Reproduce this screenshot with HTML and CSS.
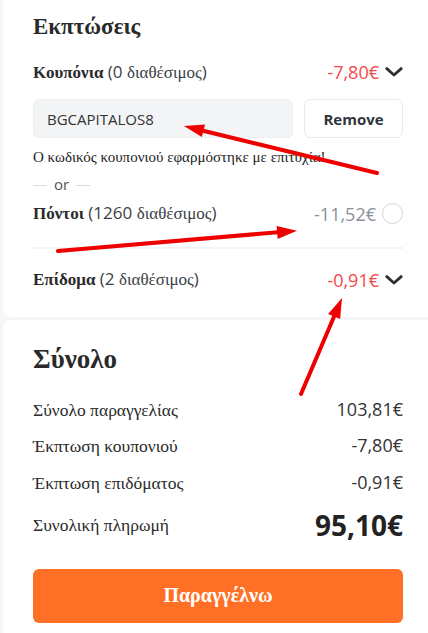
FILE: index.html
```html
<!DOCTYPE html>
<html lang="el">
<head>
<meta charset="utf-8">
<title>Εκπτώσεις</title>
<link rel="stylesheet" href="styles.css">
</head>
<body>
<div class="page">
  <section class="card discounts">
    <h2 class="card-title gr">Εκπτώσεις</h2>

    <div class="row line-row">
      <div class="label"><b class="gr">Κουπόνια</b> <span class="count">(0 <span class="gr">διαθέσιμος</span>)</span></div>
      <div class="value red">-7,80€
        <svg class="chevron" viewBox="0 0 18 10" width="18" height="10"><path d="M1.8 1.6 L9 8 L16.2 1.6" fill="none" stroke="#2b2f36" stroke-width="2.8" stroke-linecap="round" stroke-linejoin="round"/></svg>
      </div>
    </div>

    <div class="coupon-form">
      <div class="code-input">BGCAPITALOS8</div>
      <button class="remove-btn">Remove</button>
    </div>
    <p class="success gr">Ο κωδικός κουπονιού εφαρμόστηκε με επιτυχία!</p>

    <div class="or"><span class="or-line"></span><span>or</span><span class="or-line"></span></div>

    <div class="row line-row points">
      <div class="label"><b class="gr">Πόντοι</b> <span class="count">(1260 <span class="gr">διαθέσιμος</span>)</span></div>
      <div class="value grey">-11,52€ <span class="radio"></span></div>
    </div>

    <div class="divider"></div>

    <div class="row line-row bonus">
      <div class="label"><b class="gr">Επίδομα</b> <span class="count">(2 <span class="gr">διαθέσιμος</span>)</span></div>
      <div class="value red">-0,91€
        <svg class="chevron" viewBox="0 0 18 10" width="18" height="10"><path d="M1.8 1.6 L9 8 L16.2 1.6" fill="none" stroke="#2b2f36" stroke-width="2.8" stroke-linecap="round" stroke-linejoin="round"/></svg>
      </div>
    </div>
  </section>

  <section class="card summary">
    <h2 class="card-title big gr">Σύνολο</h2>
    <div class="sum-row first"><span class="gr">Σύνολο παραγγελίας</span><span class="amount">103,81€</span></div>
    <div class="sum-row"><span class="gr">Έκπτωση κουπονιού</span><span class="amount">-7,80€</span></div>
    <div class="sum-row"><span class="gr">Έκπτωση επιδόματος</span><span class="amount">-0,91€</span></div>
    <div class="sum-row total"><span class="gr">Συνολική πληρωμή</span><span class="amount grand">95,10€</span></div>
    <button class="order-btn gr">Παραγγέλνω</button>
  </section>
</div>

<svg class="annotations" viewBox="0 0 428 633" width="428" height="633">
  <g stroke="#ee0000" stroke-width="4" stroke-linecap="round" fill="#ee0000">
    <line x1="377" y1="173" x2="200" y2="130"/>
    <polygon stroke="none" points="184,126 205,124.4 201.9,137"/>
    <line x1="58" y1="251" x2="281" y2="232"/>
    <polygon stroke="none" points="297,230.7 277.7,238.9 276.6,225.9"/>
    <line x1="301" y1="394" x2="336" y2="312"/>
    <polygon stroke="none" points="342,298 340.1,319 328.1,313.9"/>
  </g>
</svg>
</body>
</html>
```
FILE: styles.css
```css
* { box-sizing: border-box; }

html, body {
  margin: 0;
  padding: 0;
  background: #f5f6f8;
  color: #333;
  font-family: "Open Sans", "Liberation Sans", sans-serif;
}

body { overflow: hidden; }

.gr { font-family: "Liberation Serif", "Times New Roman", serif; }

.page {
  padding-left: 3px;
  display: flex;
  flex-direction: column;
  gap: 3px;
}

.card {
  background: #fff;
  padding: 0 25px 0 30px;
}

.discounts {
  padding-top: 14px;
  padding-bottom: 23px;
  border-radius: 0 0 0 8px;
}

.summary {
  padding-top: 23px;
  padding-bottom: 40px;
  border-radius: 8px 0 0 0;
}

.card-title {
  margin: 0;
  font-size: 23px;
  line-height: 26px;
  font-weight: 700;
  color: #2a2a2a;
}

.card-title.big {
  font-size: 27px;
  line-height: 32px;
}

.row {
  display: flex;
  justify-content: space-between;
  align-items: center;
}

.line-row {
  height: 28px;
  line-height: 28px;
  margin-top: 18px;
}

.label {
  font-size: 17px;
  color: #333;
  white-space: nowrap;
}

.label b { font-weight: 700; color: #2a2a2a; }

.count { font-size: 17px; color: #3a3f47; }

.value {
  display: flex;
  align-items: center;
  gap: 6px;
  font-size: 18px;
}

.red { color: #f5484a; }
.grey { color: #8c9099; }

.chevron { display: block; }

.radio {
  width: 21px;
  height: 21px;
  border: 1.5px solid #cfd3d9;
  border-radius: 50%;
  background: #fff;
}

.coupon-form {
  display: flex;
  gap: 11px;
  margin-top: 13px;
  height: 39px;
}

.code-input {
  flex: 1;
  background: #f3f4f6;
  border: 1px solid #eceef1;
  border-radius: 6px;
  padding-left: 13px;
  display: flex;
  align-items: center;
  font-size: 15px;
  color: #333;
}

.remove-btn {
  width: 99px;
  background: #fff;
  border: 1px solid #e8eaed;
  border-radius: 6px;
  font-family: "Open Sans", "Liberation Sans", sans-serif;
  font-size: 15px;
  font-weight: 700;
  color: #30343b;
  padding: 0;
}

.success {
  margin: 8.5px 0 0;
  font-size: 15px;
  line-height: 20px;
  color: #222;
}

.or {
  margin-top: 7px;
  display: flex;
  align-items: center;
  gap: 7px;
  font-size: 15px;
  line-height: 20px;
  color: #555;
}

.or-line {
  width: 14px;
  height: 1px;
  background: #d9dbdf;
  margin-top: 3px;
}

.points { margin-top: 6px; }

.divider {
  margin-top: 19px;
  height: 2px;
  background: #f3f4f6;
}

.bonus { margin-top: 17px; }

.sum-row {
  display: flex;
  justify-content: space-between;
  align-items: baseline;
  height: 24px;
  line-height: 24px;
  margin-top: 12.5px;
  font-size: 17.5px;
  color: #2a2a2a;
}

.sum-row.first { margin-top: 22px; }

.amount {
  font-size: 18px;
  color: #333;
}

.sum-row.total {
  align-items: center;
  height: 36px;
  line-height: 36px;
  margin-top: 13px;
}

.amount.grand {
  font-size: 28px;
  font-weight: 700;
  color: #222;
}

.order-btn {
  display: block;
  width: 100%;
  height: 54px;
  margin-top: 26px;
  border: none;
  border-radius: 6px;
  background: #ff6f26;
  color: #fff;
  font-size: 20px;
  font-weight: 700;
  padding: 0;
}

.annotations {
  position: absolute;
  top: 0;
  left: 0;
  pointer-events: none;
}
```
